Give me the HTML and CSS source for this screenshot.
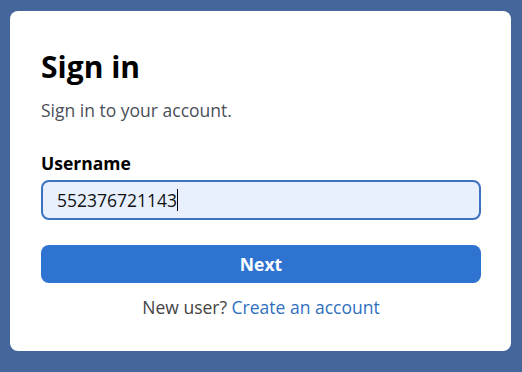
FILE: index.html
```html
<!DOCTYPE html>
<html>
<head>
<meta charset="utf-8">
<link rel="stylesheet" href="styles.css">
</head>
<body>
<div class="card">
  <h1 class="title">Sign in</h1>
  <p class="subtitle">Sign in to your account.</p>
  <label class="label">Username</label>
  <div class="input"><span class="value">552376721143</span><span class="caret"></span></div>
  <button class="btn">Next</button>
  <p class="footer">New user? <a class="link">Create an account</a></p>
</div>
</body>
</html>
```
FILE: styles.css
```css
html, body { margin: 0; padding: 0; }
body {
  background: #45669a;
  width: 522px;
  height: 372px;
  font-family: "Open Sans", sans-serif;
  padding: 11px 11px 0 10px;
  box-sizing: border-box;
}
.card {
  width: 501px;
  height: 340px;
  box-sizing: border-box;
  background: #fff;
  border-radius: 8px;
  padding: 38px 30px 0 31px;
  display: flex;
  flex-direction: column;
}
.title {
  margin: 0;
  font-size: 30px;
  font-weight: 700;
  line-height: 36px;
  color: #000;
}
.subtitle {
  margin: 13px 0 0;
  font-size: 17.5px;
  line-height: 24px;
  color: #4b4f58;
}
.label {
  margin-top: 29px;
  font-size: 17.5px;
  font-weight: 700;
  line-height: 24px;
  color: #000;
}
.input {
  margin-top: 5px;
  height: 40px;
  box-sizing: border-box;
  border: 2px solid #3b72c2;
  border-radius: 8px;
  background: #e8f0fe;
  display: flex;
  align-items: center;
  padding-left: 14px;
  font-size: 17.5px;
  color: #111;
}
.caret {
  width: 1px;
  height: 22px;
  background: #000;
}
.btn {
  margin-top: 25px;
  height: 38px;
  border: none;
  border-radius: 8px;
  background: #2f73d0;
  color: #fff;
  font-family: "Open Sans", sans-serif;
  font-size: 17.5px;
  font-weight: 700;
}
.footer {
  margin: 12px 0 0;
  text-align: center;
  font-size: 17.5px;
  line-height: 24px;
  color: #444;
}
.link { color: #2f6fc0; }
```
